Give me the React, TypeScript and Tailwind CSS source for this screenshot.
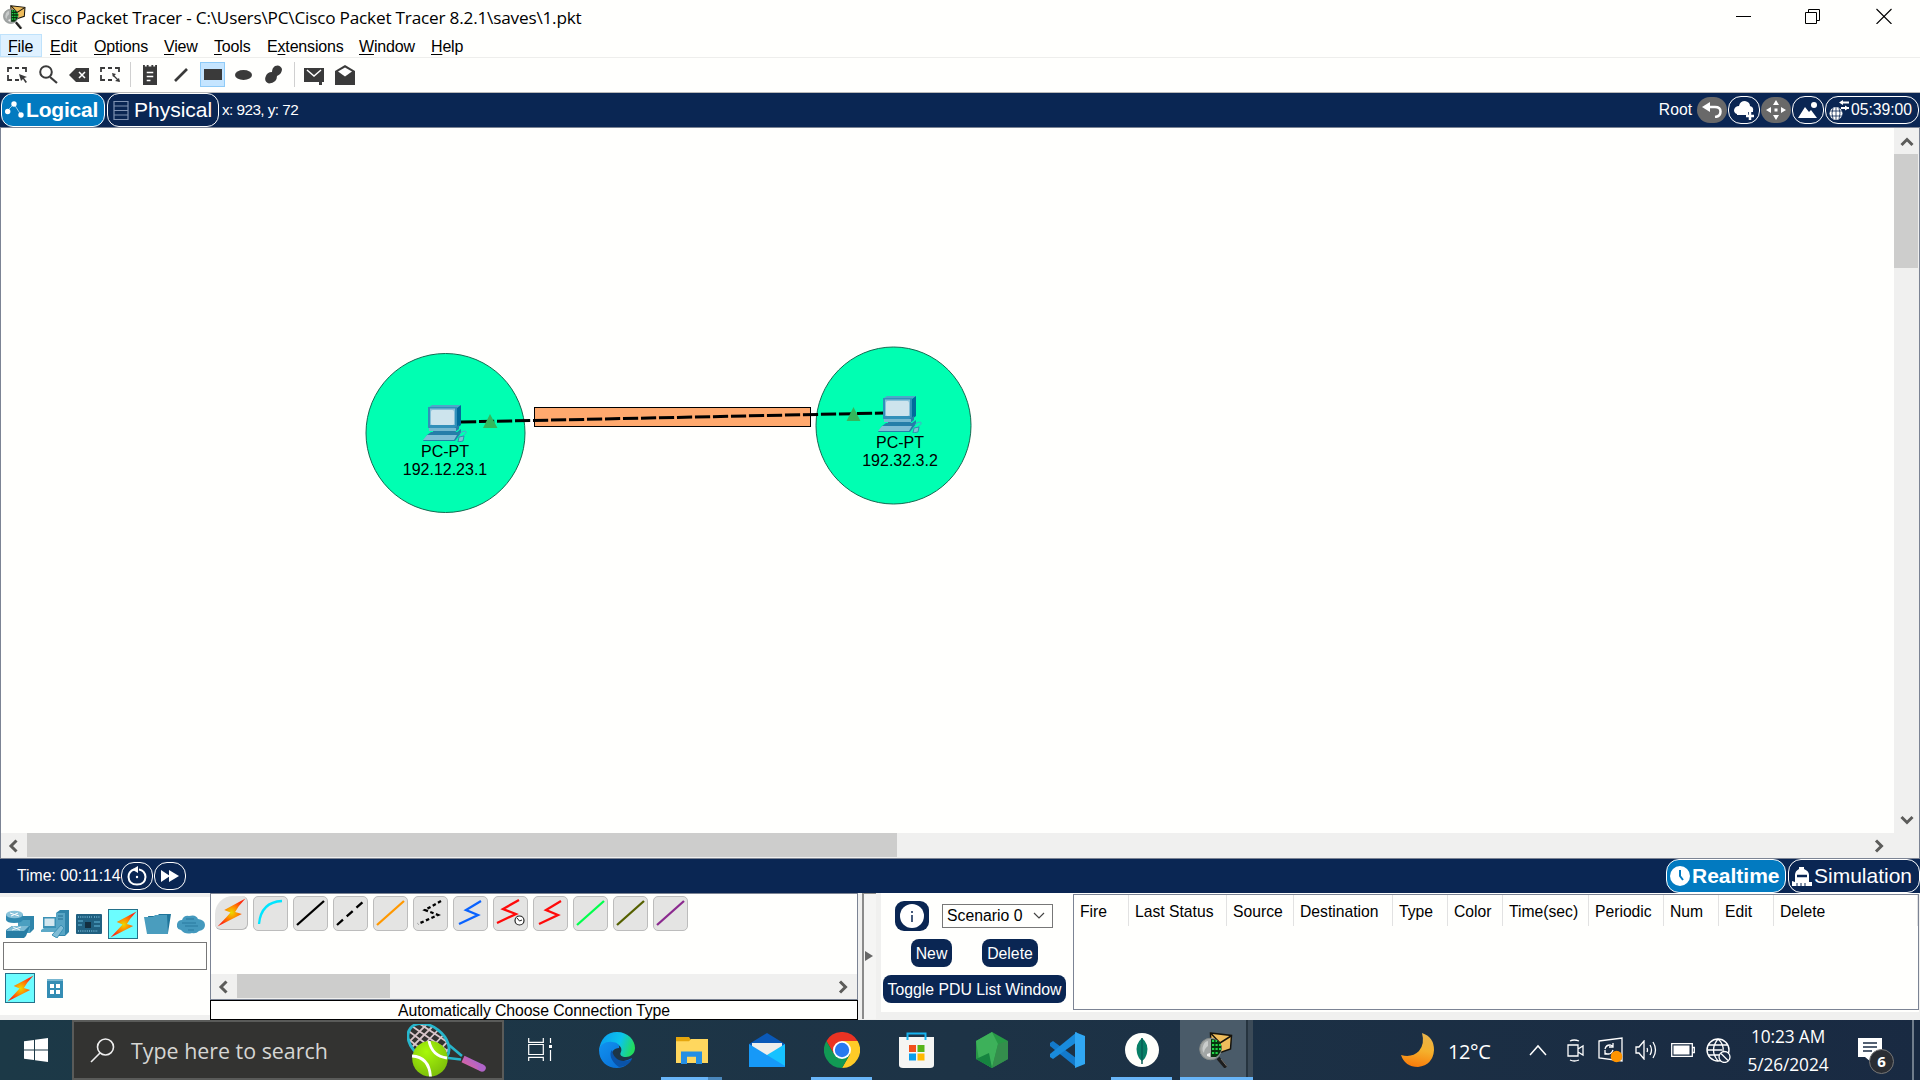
import React from "react";

type P = { className?: string; children?: React.ReactNode; box: string };

function Svg({ className = "", box, children }: P) {
  return (
    <svg viewBox={box} preserveAspectRatio="none" className={`block shrink-0 ${className}`} fill="none">
      {children}
    </svg>
  );
}

function TracerIcon({ className }: { className: string }) {
  return (
    <Svg box="0 0 34 36" className={className}>
      <path d="M19 26L27 35.500" stroke="#1d1d1d" strokeWidth="3.500" />
      <path d="M22 27L28 34.500" stroke="#77736e" strokeWidth="1" />
      <path d="M11.500 1L32.500 3.500L31.500 17L20 21L12 15Z" fill="#efbd5c" stroke="#16130c" strokeWidth="1.500" />
      <path d="M12 1.500L21 11L32 4" stroke="#16130c" strokeWidth="1.500" />
      <circle cx="11.500" cy="17" r="10.800" fill="#a2a6a5" stroke="#858a88" strokeWidth="1" />
      <path d="M12 7Q21 7 22.500 14Q23 21 17 25H12Z" fill="#06340d" />
      <path d="M13 9H18M13 13H22M13 17H22M13 21H20" stroke="#20d647" strokeWidth="2" strokeDasharray="2.200 1.300" />
      <path d="M3.500 16Q5 9 9 9V14Q5 17 5 21Q3 19 3.500 16Z" fill="#c9cccb" />
      <path d="M8 22L11 21V25L8 24Z" fill="#eee" />
    </Svg>
  );
}

function Bolt({ className }: { className: string }) {
  return (
    <Svg box="0 0 28 28" className={className}>
      <defs>
        <radialGradient id="boltFill">
          <stop offset="0" stopColor="#e9dc00" />
          <stop offset=".45" stopColor="#ff8a00" />
          <stop offset="1" stopColor="#ff2a10" />
        </radialGradient>
      </defs>
      <path d="M27.500 0.500L7 11.500L13 14L9 18.500L0.500 27.500L24 15.500L17.500 13.500L21 8Z" fill="url(#boltFill)" />
    </Svg>
  );
}

function Chevron({ dir }: { dir: "up" | "down" | "left" | "right" }) {
  const d = {
    up: "M1.500 9L7 3.500L12.500 9",
    down: "M1.500 4L7 9.500L12.500 4",
    left: "M9.500 1.500L4 7L9.500 12.500",
    right: "M4 1.500L9.500 7L4 12.500",
  }[dir];
  return (
    <Svg box="0 0 14 14" className="h-[14px] w-[14px]">
      <path d={d} stroke="#5c5c5a" strokeWidth="3" />
    </Svg>
  );
}

function TitleBar() {
  return (
    <header className="flex h-[34px] shrink-0 items-start">
      <TracerIcon className="ml-[3px] mt-[5px] h-[24px] w-[23px]" />
      <h1 className="ml-[5px] mt-[5px] w-[600px] whitespace-nowrap font-['Open_Sans',sans-serif] text-[17.2px] leading-[25px] tracking-[-0.2px] text-black">
        Cisco Packet Tracer - C:\Users\PC\Cisco Packet Tracer 8.2.1\saves\1.pkt
      </h1>
      <div className="ml-auto mt-[8px] flex pr-[28px]">
        <Svg box="0 0 16 16" className="mr-[53px] h-4 w-4">
          <path d="M0 8.500H15" stroke="#000" />
        </Svg>
        <Svg box="0 0 16 16" className="mr-[55px] h-4 w-4">
          <path d="M0.500 4.500H11.500V15.500H0.500ZM3.500 4V1.500H14.500V12.500H12" stroke="#000" />
        </Svg>
        <Svg box="0 0 16 16" className="h-4 w-4">
          <path d="M0.500 1L15.500 16M15.500 1L0.500 16" stroke="#000" strokeWidth="1.100" />
        </Svg>
      </div>
    </header>
  );
}

const menu: [string, string, string, string][] = [
  ["", "F", "ile", "w-[42px] bg-[#dff1ff] border border-[#bfe2fb] pl-[7px] leading-[24px]"],
  ["", "E", "dit", "w-[44px] pl-[8px] leading-[26px]"],
  ["", "O", "ptions", "w-[70px] pl-[8px] leading-[26px]"],
  ["", "V", "iew", "w-[50px] pl-[8px] leading-[26px]"],
  ["", "T", "ools", "w-[53px] pl-[8px] leading-[26px]"],
  ["E", "x", "tensions", "w-[92px] pl-[8px] leading-[26px]"],
  ["", "W", "indow", "w-[72px] pl-[8px] leading-[26px]"],
  ["", "H", "elp", "w-[60px] pl-[8px] leading-[26px]"],
];

function MenuBar() {
  return (
    <nav className="flex h-[24px] shrink-0 items-start border-b border-[#eeeeec] text-[16px] tracking-[-0.17px] text-black">
      {menu.map(([a, u, b, cls]) => (
        <div key={u + b} className={`box-border h-[23px] whitespace-nowrap ${cls}`}>
          {a}
          <span className="underline decoration-1 underline-offset-[2px]">{u}</span>
          {b}
        </div>
      ))}
    </nav>
  );
}

function ToolBar() {
  return (
    <div className="flex h-[35px] shrink-0 items-center border-b border-[#b9b9b9] pb-[1px] text-[#3a3a3a]">
      <Svg box="0 0 21 16" className="ml-[7px] h-4 w-[21px]">
        <path d="M1 5V1H5M8 1H12M15 1H19V5M1 8V13H5M8 13H12" stroke="currentColor" strokeWidth="1.800" />
        <path d="M12 7L20 10L17 11L20 15L18.500 16L16 12L14 14Z" fill="currentColor" />
      </Svg>
      <Svg box="0 0 20 19" className="ml-[10px] h-[19px] w-5">
        <circle cx="8" cy="7" r="5.800" stroke="currentColor" strokeWidth="2" />
        <path d="M12 12L19 18" stroke="currentColor" strokeWidth="2.200" />
      </Svg>
      <Svg box="0 0 20 14" className="ml-[11px] h-[14px] w-5">
        <path d="M0 7L7 0H20V14H7Z" fill="currentColor" />
        <path d="M10 4L16 10M16 4L10 10" stroke="#fff" strokeWidth="1.500" />
      </Svg>
      <Svg box="0 0 21 16" className="ml-[11px] h-4 w-[21px]">
        <path d="M1 5V1H5M8 1H12M15 1H19V5M1 8V13H5M8 13H12" stroke="currentColor" strokeWidth="1.800" />
        <path d="M12 6L16 7L13 10ZM20 15L15 14L19 11Z" fill="currentColor" />
        <path d="M13 8L19 14" stroke="currentColor" strokeWidth="1.300" />
      </Svg>
      <div className="ml-[9px] h-[25px] w-px bg-[#d0d0d0]" />
      <Svg box="0 0 15 20" className="ml-[12px] h-5 w-[14px]">
        <path d="M0 0H2V1.500H4V0H6V1.500H9V0H11V1.500H13V0H15V20H0Z" fill="currentColor" />
        <path d="M4 7.500H11M4 11.500H11M4 15.500H8" stroke="#fff" strokeWidth="1.500" />
      </Svg>
      <Svg box="0 0 14 14" className="ml-[17px] h-[14px] w-[14px]">
        <path d="M1 13L13 1" stroke="currentColor" strokeWidth="2.600" />
      </Svg>
      <div className="ml-[12px] flex h-[25px] w-[25px] items-center justify-center border border-[#8fcbf8] bg-[#c5e5ff]">
        <div className="h-[11px] w-[18px] bg-[#3a3a3a]" />
      </div>
      <div className="ml-[10px] h-[10px] w-[17px] rounded-[50%] bg-[#3a3a3a]" />
      <Svg box="0 0 17 19" className="ml-[13px] h-[19px] w-[17px]">
        <path d="M10 1Q15-1 17 4Q17 9 12 11Q12 18 4 18.500Q-1 17 0.500 12Q2 7 7 7Q7 3 10 1Z" fill="currentColor" />
      </Svg>
      <div className="ml-[12px] h-[25px] w-px bg-[#d0d0d0]" />
      <Svg box="0 0 20 18" className="ml-[9px] mt-[2px] h-[18px] w-5">
        <path d="M0 1H20V15H18V18H15V15H0Z" fill="currentColor" />
        <path d="M3 3L10 9L17 3" stroke="#fff" strokeWidth="1.500" />
      </Svg>
      <Svg box="0 0 20 20" className="ml-[11px] h-5 w-5">
        <path d="M0 6L10 0L20 6V20H0Z" fill="currentColor" />
        <path d="M3 6.500L10 2.500L17 6.500L10 11.500Z" fill="#fff" />
      </Svg>
    </div>
  );
}

const pill = "flex h-[28px] w-[32px] items-center justify-center rounded-[13px] border border-white";
const greyPill = "flex h-[26px] w-[30px] items-center justify-center rounded-[13px] bg-[#696969]";

function ViewBar() {
  return (
    <div className="flex h-[34px] shrink-0 items-center bg-[#0a2653] text-[16px] text-white">
      <button className="ml-px flex h-[34px] w-[104px] items-center rounded-[12px] border border-white bg-[#027ac0] pl-[3px] text-[21px] font-bold tracking-[-0.2px]">
        <Svg box="0 0 20 18" className="h-[18px] w-5">
          <path d="M2 10L9 3L16 14" stroke="#9bcce8" />
          <circle cx="9" cy="3" r="2.700" fill="#fff" />
          <circle cx="2.700" cy="10.500" r="2.700" fill="#fff" />
          <circle cx="16" cy="14" r="2.700" fill="#fff" />
        </Svg>
        <span className="ml-[1px]">Logical</span>
      </button>
      <button className="ml-[2px] flex h-[34px] w-[112px] items-center rounded-[12px] border border-white pl-[5px] text-[21px]">
        <Svg box="0 0 16 19" className="h-[19px] w-4">
          <path d="M1 0.500H15V18.500H1ZM1 5H15M1 9.500H15M1 14H15" stroke="#7f92b2" strokeWidth="1.200" />
        </Svg>
        <span className="ml-[5px]">Physical</span>
      </button>
      <span className="ml-[3px] text-[15.300px] tracking-[-0.55px]">x: 923, y: 72</span>
      <div className="ml-auto flex items-center gap-px pr-px">
        <span className="mr-[4px] text-[15.700px]">Root</span>
        <div className={greyPill}>
          <Svg box="0 0 20 16" className="h-4 w-5">
            <path d="M0 5L8 0V10Z" fill="#fff" />
            <path d="M6 5H13Q18.500 5 18.500 9.500Q18.500 14.500 13 15" stroke="#fff" strokeWidth="2.500" />
          </Svg>
        </div>
        <div className={pill}>
          <Svg box="0 0 20 19" className="h-[19px] w-5">
            <path d="M3 13Q0 12 0 9Q1 5 5 5Q6 0 11 0Q16 1 16 5Q20 6 19 10V11H14V14H3Z" fill="#fff" />
            <path d="M16 11V19M12 15H20" stroke="#fff" strokeWidth="2.500" />
          </Svg>
        </div>
        <div className={greyPill}>
          <Svg box="0 0 20 20" className="h-5 w-5">
            <path d="M10 0L13 5H7ZM10 20L7 15H13ZM0 10L5 7V13ZM20 10L15 13V7ZM8.500 8.500H11.500V11.500H8.500Z" fill="#fff" />
          </Svg>
        </div>
        <div className={pill}>
          <Svg box="0 0 20 16" className="h-4 w-5">
            <path d="M0 16L7 5L11 10L13 8L19 16Z" fill="#fff" />
            <circle cx="16" cy="3" r="3" fill="#fff" />
          </Svg>
        </div>
        <div className="flex h-[28px] w-[94px] items-center rounded-[13px] border border-white pl-[3px]">
          <Svg box="0 0 20 20" className="h-5 w-5">
            <circle cx="7" cy="13.500" r="6.500" fill="#fff" />
            <path d="M1 11H13M1 16H13M7 7V20M4 8Q2 13 4 19M10 8Q12 13 10 19" stroke="#0a2653" strokeWidth=".8" />
            <path d="M12 2.500H20M12 8H20" stroke="#fff" strokeWidth="2" />
            <path d="M10 2.500L14 0V5ZM20 8L16 5.500V10.500Z" fill="#fff" />
          </Svg>
          <span className="ml-[2px] text-[15.700px]">05:39:00</span>
        </div>
      </div>
    </div>
  );
}

function PC() {
  return (
    <Svg box="0 0 44 37" className="mb-px h-[37px] w-[44px]">
      <path d="M6 2L9 0H38L34 3Z" fill="#4fa6c9" />
      <path d="M34 3L38 0V20L34 23Z" fill="#006a9b" />
      <path d="M5 2H34V23H5Z" fill="#3190ba" />
      <path d="M7 3.500H32V20H7Z" fill="#86c0d9" />
      <rect x="8" y="5" width="23" height="15" rx="1.500" fill="#cde4ed" />
      <path d="M10 23H31L36 20V24L31 28H10Z" fill="#257ea9" />
      <path d="M6 23H33V26H6Z" fill="#76b6d1" />
      <path d="M4 30L8 27H34L38 24V28L32 36H0Z" fill="#257ea9" />
      <path d="M4 30H34L31 35H0Z" fill="#80bdd6" />
      <path d="M37 29Q38 26 42 26Q45 27 41 30L40 32" stroke="#4fa6c9" />
      <path d="M36 32L41 31L40 36L35 37Z" fill="#80bdd6" stroke="#257ea9" strokeWidth=".8" />
    </Svg>
  );
}

function Workspace() {
  return (
    <main className="grid h-[732px] shrink-0 grid-cols-[1893px_25px] grid-rows-[705px_25px] border border-[#7c8494]">
      <section className="relative overflow-hidden bg-[#fffffd] text-[16px] leading-[18px] text-black">
        <Svg box="1 128 1893 705" className="absolute inset-0 h-[705px] w-[1893px]">
          <circle cx="445.500" cy="433" r="79.500" fill="#00ffb2" stroke="#146b51" strokeWidth="1" />
          <ellipse cx="893.500" cy="425.500" rx="77.500" ry="78.500" fill="#00ffb2" stroke="#146b51" strokeWidth="1" />
          <rect x="534.500" y="407.500" width="276" height="19" fill="#ffa96e" stroke="#000" />
          <path d="M461 422L884 413" stroke="#000" strokeWidth="3" strokeDasharray="15.200 2.800" />
          <path d="M490 414L497.500 428H483ZM853.500 407L860.500 421H846.500Z" fill="#34b75c" />
        </Svg>
        <figure className="absolute left-[394px] top-[277px] flex w-[100px] flex-col items-center">
          <PC />
          <figcaption className="text-center">PC-PT<br />192.12.23.1</figcaption>
        </figure>
        <figure className="absolute left-[849px] top-[268px] flex w-[100px] flex-col items-center">
          <PC />
          <figcaption className="text-center">PC-PT<br />192.32.3.2</figcaption>
        </figure>
      </section>
      <div className="flex flex-col items-center bg-[#f0f0ef] pb-[6px]">
        <div className="flex h-[26px] items-center pt-[3px]"><Chevron dir="up" /></div>
        <div className="h-[114px] w-[24px] self-start bg-[#cdcdcc]" />
        <div className="mt-auto"><Chevron dir="down" /></div>
      </div>
      <div className="flex items-center bg-[#f0f0ef]">
        <div className="flex w-[26px] justify-center"><Chevron dir="left" /></div>
        <div className="h-[24px] w-[870px] self-start bg-[#cdcdcc]" />
        <div className="ml-auto pr-[8px]"><Chevron dir="right" /></div>
      </div>
      <div className="bg-[#f0f0ef]" />
    </main>
  );
}

function TimeBar() {
  return (
    <div className="flex h-[34px] shrink-0 items-center bg-[#0a2653] text-[16px] text-white">
      <span className="ml-[17px] w-[104px] whitespace-nowrap text-[15.800px]">Time: 00:11:14</span>
      <div className={pill}>
        <Svg box="0 0 20 20" className="h-5 w-5">
          <path d="M7 3.500Q1.500 5.500 1.500 11Q2 18.500 10 18.500Q18 18.500 18.500 11Q18 4.500 12 3.500" stroke="#fff" strokeWidth="2" />
          <path d="M5 3.500L11 0V7Z" fill="#fff" />
          <circle cx="10" cy="11" r="1.200" fill="#fff" />
        </Svg>
      </div>
      <div className={`ml-px ${pill}`}>
        <Svg box="0 0 18 12" className="h-3 w-[18px]">
          <path d="M0 0L9 6L0 12ZM8 0L18 6L8 12Z" fill="#fff" />
        </Svg>
      </div>
      <button className="ml-auto flex h-[34px] w-[120px] items-center rounded-[13px] border border-white bg-[#027ac0] pl-[3px] text-[21px] font-bold">
        <Svg box="0 0 20 20" className="h-5 w-5">
          <circle cx="10" cy="10" r="10" fill="#fff" />
          <path d="M10 4V10L13 14" stroke="#027ac0" strokeWidth="2" />
        </Svg>
        <span className="ml-[2px]">Realtime</span>
      </button>
      <button className="ml-[2px] flex h-[34px] w-[132px] items-center rounded-[13px] border border-white pl-[3px] text-[21px]">
        <Svg box="0 0 20 19" className="h-[19px] w-5">
          <path d="M3 15V8Q3 4 7 2V0H12V2Q17 4 17 8V15H20V19H0V14Z" fill="#fff" />
          <path d="M5 9H15" stroke="#0a2653" strokeWidth="2.500" />
          <path d="M5 16V19M9 16V19M13 16V19" stroke="#0a2653" />
        </Svg>
        <span className="ml-[2px]">Simulation</span>
      </button>
    </div>
  );
}

function DevicePanel() {
  return (
    <aside className="flex h-[127px] w-[210px] shrink-0 flex-col border-y-[5px] border-t-[4px] border-[#f0f0ef] bg-[#fffffd]">
      <div className="mt-[12px] flex h-[30px] items-center">
        <Svg box="0 0 28 28" className="ml-[6px] h-7 w-7">
          <path d="M12 10L17 6H28V19L24 23H12Z" fill="#2f85aa" />
          <path d="M12 10H24V23H12Z" fill="#4b9fc0" />
          <path d="M0 4V10Q1 13 8 13Q17 13 17 9V4Z" fill="#3089b0" />
          <ellipse cx="8.500" cy="4.500" rx="8.500" ry="3.800" fill="#8ac3da" />
          <path d="M4 3L13 6M12 3L5 6" stroke="#fff" />
          <path d="M0 20L6 16H24L20 26L18 28H0Z" fill="#277da4" />
          <path d="M0 21L6 16H23L18 21Z" fill="#7dbbd4" />
          <path d="M6 20L15 17M7 17L14 20" stroke="#fff" strokeWidth=".8" />
        </Svg>
        <Svg box="0 0 28 28" className="ml-[7px] h-7 w-7">
          <path d="M15 3L19 0H28V22L24 26H15Z" fill="#2f85aa" />
          <path d="M15 3H24V25H15Z" fill="#57a5c5" />
          <path d="M17 6H22M17 9H22" stroke="#246f91" />
          <rect x="2" y="7" width="13" height="11" fill="#3b91b5" />
          <rect x="3.500" y="8.500" width="10" height="7.500" fill="#d3e7ef" />
          <path d="M0 20L3 18H17L14 22H0Z" fill="#5ca9c7" />
          <path d="M11 25L20 15L23 18L16 28Z" fill="#7fbcd5" stroke="#3b91b5" />
        </Svg>
        <Svg box="0 0 26 20" className="ml-[7px] h-5 w-[26px]">
          <rect width="26" height="20" rx="1" fill="#206080" />
          <rect x="9" y="8" width="6" height="6" fill="#132f40" />
          <path d="M2 3H16M18 3H24M2 17H22" stroke="#6fb2cf" strokeWidth="1.500" strokeDasharray="1 1.200" />
          <path d="M2 7H7M2 11H6M18 8H24M18 12H24" stroke="#4e9cbd" strokeWidth="1.300" />
        </Svg>
        <div className="ml-[6px] flex h-[30px] w-[30px] items-center justify-center border border-[#24718a] bg-[#6cfdff]">
          <Bolt className="h-[27px] w-[27px]" />
        </div>
        <Svg box="0 0 27 20" className="ml-[6px] h-5 w-[27px]">
          <path d="M4 2H13L15 0H27L24 19H7Z" fill="#1f759a" />
          <path d="M0 3H9L11 1H23L24 20H3Z" fill="#4a9dbe" />
        </Svg>
        <Svg box="0 0 28 19" className="ml-[6px] h-[19px] w-7">
          <path d="M4 15Q-1 14 0 9Q1 5 5 5Q7 0 12 1Q19-1 21 4Q28 5 28 10Q28 15 22 16Q19 19 15 18Q8 20 4 15Z" fill="#4499bd" />
          <path d="M9 4H17M5 8H19M8 11H21M11 15H17" stroke="#297ba0" strokeWidth="1.200" />
        </Svg>
      </div>
      <input aria-label="Device search" className="ml-[3px] mt-[3px] block h-[28px] w-[204px] shrink-0 border border-[#777] bg-[#fffffd]" />
      <div className="mt-[3px] flex h-[30px] items-center pl-[5px]">
        <div className="flex h-[30px] w-[30px] items-center justify-center border border-[#24718a] bg-[#6cfdff]">
          <Bolt className="h-[27px] w-[27px]" />
        </div>
        <Svg box="0 0 16 19" className="ml-[12px] h-[19px] w-4">
          <path d="M0 0H16V19H0Z" fill="#348db4" />
          <path d="M0 0H16V2H0Z" fill="#77b6d0" />
          <path d="M3 5H7V9H3ZM9 5H13V9H9ZM3 11H7V15H3ZM9 11H13V15H9Z" fill="#fff" />
        </Svg>
      </div>
    </aside>
  );
}

const cables: { d: string; c: string; dash?: string }[] = [
  { d: "M6 28Q8 6 29 5", c: "#00e5ff" },
  { d: "M4 29L31 5", c: "#000" },
  { d: "M4 29L31 5", c: "#000", dash: "8 5" },
  { d: "M4 29L31 5", c: "#ff9800" },
  { d: "M28 5L12 14L25 19L5 28", c: "#000", dash: "3.5 2.5" },
  { d: "M28 5L13 14L25 19L6 28", c: "#0a63ff" },
  { d: "M26 4L10 13L23 18L4 27", c: "#ff0a0a" },
  { d: "M28 5L13 14L25 19L6 28", c: "#ff0a0a" },
  { d: "M4 29L31 5", c: "#00ff4c" },
  { d: "M4 29L31 5", c: "#556000" },
  { d: "M4 29L31 5", c: "#8b2a8f" },
];

function CablePanel() {
  return (
    <section className="flex h-[127px] w-[648px] shrink-0 flex-col">
      <div className="flex h-[107px] flex-col border border-[#7c8494] bg-[#fffffd]">
        <div className="ml-[4px] mt-[2px] flex h-[35px]">
          <div className="mr-[5px] flex h-[34px] w-[33px] items-center justify-center rounded-[6px] rounded-tl-[18px] border-b border-r border-[#b8b8b8] bg-[#e4e4e3]">
            <Bolt className="h-[29px] w-[29px]" />
          </div>
          <div className="flex gap-[5px]">
            {cables.map((k, i) => (
              <div key={i} className="h-[35px] w-[35px] rounded-[5px] border border-[#bcbcbc] bg-[#e4e4e3]">
                <Svg box="1 1 33 33" className="h-[33px] w-[33px]">
                  <path d={k.d} stroke={k.c} strokeWidth="2.300" strokeDasharray={k.dash} />
                  {i === 6 && (
                    <>
                      <circle cx="26.500" cy="24.500" r="4.500" fill="#fff" stroke="#222" strokeWidth="1.200" />
                      <path d="M24 22L26.500 25L29 24" stroke="#222" />
                    </>
                  )}
                </Svg>
              </div>
            ))}
          </div>
        </div>
        <div className="mt-auto flex h-[25px] items-center bg-[#f0f0ef]">
          <div className="flex w-[26px] justify-center"><Chevron dir="left" /></div>
          <div className="h-[24px] w-[153px] self-start bg-[#cdcdcc]" />
          <div className="ml-auto pr-[7px]"><Chevron dir="right" /></div>
        </div>
      </div>
      <div className="h-[20px] border border-black bg-[#fffffd] text-center text-[15.800px] leading-[19px] tracking-[-0.1px] text-black">
        Automatically Choose Connection Type
      </div>
    </section>
  );
}

const navy = "flex h-[28px] items-center justify-center rounded-[8px] bg-[#0a2653] pt-px text-[15.800px] text-white whitespace-nowrap";

function ScenarioPanel() {
  return (
    <section className="flex h-[119px] w-[191px] shrink-0 flex-col bg-[#fffffd] text-black">
      <div className="mt-[8px] flex h-[30px] items-center pl-[14px]">
        <div className="flex h-[30px] w-[34px] items-center justify-center rounded-[9px] bg-[#0a2653]">
          <Svg box="0 0 24 24" className="h-6 w-6">
            <circle cx="12" cy="12" r="12" fill="#fff" />
            <path d="M12 7V9M12 11V18" stroke="#0a2653" strokeWidth="1.500" />
          </Svg>
        </div>
        <div className="ml-[13px] flex h-[24px] w-[111px] items-center border border-[#777] pl-[4px] text-[15.800px]">
          Scenario 0
          <Svg box="0 0 12 8" className="ml-auto mr-[7px] h-2 w-3">
            <path d="M1 1L6 6L11 1" stroke="#444" strokeWidth="1.200" />
          </Svg>
        </div>
      </div>
      <div className="mt-[8px] flex pl-[30px]">
        <button className={`w-[41px] ${navy}`}>New</button>
        <button className={`ml-[30px] w-[56px] ${navy}`}>Delete</button>
      </div>
      <button className={`ml-[2px] mt-[8px] w-[183px] ${navy}`}>Toggle PDU List Window</button>
    </section>
  );
}

const columns: [string, string][] = [
  ["Fire", "w-[55px]"],
  ["Last Status", "w-[98px]"],
  ["Source", "w-[67px]"],
  ["Destination", "w-[99px]"],
  ["Type", "w-[55px]"],
  ["Color", "w-[55px]"],
  ["Time(sec)", "w-[86px]"],
  ["Periodic", "w-[75px]"],
  ["Num", "w-[55px]"],
  ["Edit", "w-[55px]"],
  ["Delete", "w-[144px]"],
];

function BottomDock() {
  return (
    <div className="flex h-[127px] shrink-0 bg-[#f0f0ef]">
      <DevicePanel />
      <CablePanel />
      <div className="ml-[4px] flex h-[126px] w-[14px] shrink-0 items-center border-l-2 border-t border-[#8b8b8b] bg-[#f5f5f4] pb-[2px] pl-px">
        <Svg box="0 0 8 10" className="h-[10px] w-2">
          <path d="M0 0L8 5L0 10Z" fill="#666" />
        </Svg>
      </div>
      <div className="ml-[5px] flex h-[119px] shrink-0 bg-[#fffffd]">
        <ScenarioPanel />
        <div className="ml-[1px] mt-px h-[116px] w-[846px] border border-[#7c8494] text-[15.700px] text-black">
          <div className="flex h-[31px]">
            {columns.map(([label, w]) => (
              <div key={label} className={`box-border shrink-0 whitespace-nowrap border-r border-[#e2e2e2] pl-[6px] leading-[33px] ${w}`}>
                {label}
              </div>
            ))}
          </div>
        </div>
      </div>
    </div>
  );
}

function SearchBox() {
  return (
    <div className="ml-[24px] flex h-[60px] w-[432px] shrink-0 items-center border-2 border-[#5a5b59] bg-[#333331]">
      <Svg box="0 0 25 25" className="ml-[16px] h-[25px] w-[25px]">
        <circle cx="15.500" cy="9" r="8" stroke="#eee" strokeWidth="1.600" />
        <path d="M10 15L1 24" stroke="#eee" strokeWidth="1.600" />
      </Svg>
      <span className="ml-[16px] w-[260px] whitespace-nowrap pt-[3px] font-['Open_Sans',sans-serif] text-[21.400px] tracking-[0px] text-[#d6d6d4]">Type here to search</span>
      <Svg box="0 0 80 54" className="ml-[16px] mt-[2px] h-[54px] w-20">
        <defs>
          <linearGradient id="grip" x1="52" y1="40" x2="60" y2="30" gradientUnits="userSpaceOnUse">
            <stop stopColor="#e0649b" />
            <stop offset="1" stopColor="#b064c8" />
          </linearGradient>
          <radialGradient id="ball" cx=".4" cy=".3" r=".8">
            <stop stopColor="#a8f80a" />
            <stop offset="1" stopColor="#78b90a" />
          </radialGradient>
          <clipPath id="head">
            <ellipse cx="21.500" cy="18.500" rx="22" ry="15.500" transform="rotate(38 21.500 18.500)" />
          </clipPath>
        </defs>
        <path clipPath="url(#head)" d="M0 6L44 38M2 0L48 32M10 -2L48 23M0 14L36 42M-2 22L20 0M2 26L28 0M8 30L35 2M14 35L40 7M20 39L46 12M26 42L48 18" stroke="#d9c6ca" strokeWidth="1.800" />
        <ellipse cx="21.500" cy="18.500" rx="23" ry="15.800" transform="rotate(38 21.500 18.500)" stroke="#27b6cc" strokeWidth="2.800" />
        <path d="M42 21L55 32M54 35.500L37 33.500" stroke="#27b6cc" strokeWidth="2.600" />
        <path d="M56 35L76 44.500" stroke="url(#grip)" strokeWidth="7" />
        <path d="M74 43.500L75.500 44.200" stroke="#b064c8" strokeWidth="6.600" strokeLinecap="round" />
        <circle cx="23" cy="34.700" r="17.800" fill="url(#ball)" />
        <path d="M22 17Q25 32 40 34M5 32Q22 33 23.500 52.500" stroke="#fff" strokeWidth="2.800" />
      </Svg>
    </div>
  );
}

function AppSlot({ children, on }: { children: React.ReactNode; on?: boolean }) {
  return (
    <div className="flex h-[60px] w-[61px] shrink-0 flex-col items-center">
      <div className="flex h-[57px] w-full items-center justify-center pb-px pt-[4px]">{children}</div>
      <div className={`h-[3px] w-full ${on ? "bg-[#68b5f8]" : ""}`} />
    </div>
  );
}

function Taskbar() {
  return (
    <footer className="flex h-[60px] shrink-0 items-center bg-linear-to-r from-[#1c3947] via-[#1d3346] to-[#192a42] text-white">
      <Svg box="0 0 24 24" className="ml-[24px] h-6 w-6">
        <path d="M0 3.300L10 2V11.500H0ZM11 1.800L24 0V11.500H11ZM0 12.500H10V22L0 20.700ZM11 12.500H24V24L11 22.200Z" fill="#fff" />
      </Svg>
      <SearchBox />
      <Svg box="0 0 25 24" className="ml-[24px] h-6 w-[25px]">
        <path d="M.7 0V4.300H15.300V0M.7 6.500H15.300V16.500H.7ZM.7 23V19.300H15.300V23M22.500 0V5M22.500 12V23" stroke="#fff" strokeWidth="1.200" />
        <path d="M21 7H24V10H21Z" fill="#fff" />
      </Svg>
      <div className="ml-[33px] flex gap-[14px]">
        <AppSlot>
          <Svg box="0 0 36 36" className="h-9 w-9">
            <defs>
              <linearGradient id="edgeTop" x1="4" y1="6" x2="34" y2="16" gradientUnits="userSpaceOnUse">
                <stop stopColor="#0aa4f0" />
                <stop offset=".55" stopColor="#0cc4ec" />
                <stop offset="1" stopColor="#22dc5e" />
              </linearGradient>
              <linearGradient id="edgeLow" x1="2" y1="12" x2="20" y2="34" gradientUnits="userSpaceOnUse">
                <stop stopColor="#108fee" />
                <stop offset="1" stopColor="#0a72d8" />
              </linearGradient>
            </defs>
            <path d="M0 19C1 7 8 0 18 0C29 0 36 8 36 16C36 22 31 25 27 25C23 25 20 23 22 20C24 15 19 11 13 11C7 11 1 14 0 19Z" fill="url(#edgeTop)" />
            <path d="M0 18C1 12 8 9 13 10C18 10 21 13 20 16C15 16 12 20 13 24C15 31 24 31 33 26C30 32 25 36 18 36C8 36 0 29 0 18Z" fill="url(#edgeLow)" />
            <path d="M13 18C10 21 11 29 20 35C27 35 31 31 33 27C24 31 15 29 13 18Z" fill="#0a53a8" />
          </Svg>
        </AppSlot>
        <div className="flex h-[60px] w-[61px] flex-col items-center">
          <div className="flex h-[57px] items-center pt-[4px]">
            <Svg box="0 0 32 26" className="h-[27px] w-8">
              <path d="M0 0H13L15 3H30V24H0Z" fill="#e5a60d" />
              <path d="M0 4H13L15 2H32V25H0Z" fill="#ffd75e" />
              <path d="M5 26V14H26V26H20V19H11V26Z" fill="#258fe4" />
            </Svg>
          </div>
          <div className="flex h-[3px] w-full"><div className="w-[47px] bg-[#68b5f8]" /><div className="w-[14px] bg-[#4a87bc]" /></div>
        </div>
        <AppSlot>
          <Svg box="0 0 36 34" className="h-[34px] w-9">
            <path d="M0 11L18 0L36 11V34H0Z" fill="#0a59b8" />
            <path d="M3 10H33V22L18 24L3 16Z" fill="#eeeeec" />
            <path d="M36 11V34H0L18 22Z" fill="#16c2ff" />
            <path d="M0 11L36 33V34H0Z" fill="#1699f8" />
          </Svg>
        </AppSlot>
        <AppSlot on>
          <Svg box="0 0 36 36" className="h-9 w-9">
            <path d="M2.400 9A18 18 0 0 1 33.600 9H18L10.200 22.500Z" fill="#ea3323" />
            <path d="M33.600 9A18 18 0 0 1 18 36L25.800 22.500L18 9Z" fill="#ffcb27" />
            <path d="M2.400 9A18 18 0 0 0 18 36L25.800 22.500H10.200Z" fill="#119954" />
            <circle cx="18" cy="18" r="9" fill="#fff" />
            <circle cx="18" cy="18" r="7.200" fill="#287aef" />
          </Svg>
        </AppSlot>
        <AppSlot>
          <Svg box="0 0 35 36" className="h-9 w-[35px]">
            <path d="M8.500 9V1.500H26.500V9" stroke="#16b3ef" strokeWidth="2" />
            <path d="M0 5H35V33Q35 36 31 36H4Q0 36 0 33Z" fill="#f5f5f3" />
            <path d="M8.500 5V8M26.500 5V8" stroke="#16b3ef" strokeWidth="2" />
            <path d="M10 13H17V20H10Z" fill="#f2501c" />
            <path d="M18.500 13H25.500V20H18.500Z" fill="#58b51a" />
            <path d="M10 21.500H17V28.500H10Z" fill="#0a9dea" />
            <path d="M18.500 21.500H25.500V28.500H18.500Z" fill="#ffb900" />
          </Svg>
        </AppSlot>
        <AppSlot>
          <Svg box="0 0 32 36" className="h-9 w-8">
            <path d="M16 0L32 9V27L16 36L0 27V9Z" fill="#279946" />
            <path d="M16 0L0 9L3 28L16 36L22 12Z" fill="#3db15a" />
            <path d="M22 12L32 9V27L16 36Z" fill="#348e4c" />
            <path d="M0 27L13 21L16 36Z" fill="#168440" />
          </Svg>
        </AppSlot>
        <AppSlot>
          <Svg box="0 0 36 36" className="h-9 w-9">
            <path d="M1 11L4 9L27 26V35L1 14Z" fill="#137acb" />
            <path d="M1 25L4 27L28 10V0L1 22Z" fill="#198bdc" />
            <path d="M26 0L36 4V32L26 36Z" fill="#30a7f4" />
          </Svg>
        </AppSlot>
        <AppSlot on>
          <Svg box="0 0 34 34" className="h-[34px] w-[34px]">
            <circle cx="17" cy="17" r="17" fill="#fffffb" />
            <path d="M17 5Q10 11 12 20Q13 25 17 28Q21 25 22 20Q24 11 17 5Z" fill="#087f65" />
            <path d="M17 5V31" stroke="#075e56" strokeWidth="1.500" />
          </Svg>
        </AppSlot>
      </div>
      <div className="ml-[8px] flex h-[60px] w-[73px] shrink-0 flex-col bg-[#4a5b69]">
        <div className="flex h-[57px]">
          <div className="flex w-[66px] items-center justify-center pl-[5px] pt-[3px]"><TracerIcon className="h-9 w-[34px]" /></div>
          <div className="w-[2px] bg-[#26343f]" />
          <div className="w-[5px] bg-[#3b4a57]" />
        </div>
        <div className="h-[3px] bg-[#68b5f8]" />
      </div>
      <div className="ml-auto flex h-[60px] items-center font-['Open_Sans',sans-serif]">
        <Svg box="0 0 33 34" className="h-[34px] w-[33px]">
          <defs>
            <linearGradient id="moon" x1="20" y1="0" x2="14" y2="34" gradientUnits="userSpaceOnUse">
              <stop stopColor="#e9b44c" />
              <stop offset=".5" stopColor="#f5b02c" />
              <stop offset="1" stopColor="#f97b0a" />
            </linearGradient>
          </defs>
          <path d="M21 0Q33 4 33 17Q32 32 17 34Q4 34 0 22Q11 25 18 18Q24 11 21 0Z" fill="url(#moon)" />
        </Svg>
        <span className="ml-[14px] w-[81px] pt-[4px] text-[20px] tracking-[-0.4px]">12°C</span>
        <Svg box="0 0 18 12" className="h-3 w-[18px]">
          <path d="M1 11L9 2L17 11" stroke="#fff" strokeWidth="1.500" />
        </Svg>
        <Svg box="0 0 17 23" className="ml-[20px] h-[23px] w-[17px]">
          <path d="M1 6H11V17H1ZM11 10L16 7V16L11 13M3 2Q7 0 12 2M3 21Q7 23 12 21" stroke="#fff" strokeWidth="1.300" />
        </Svg>
        <Svg box="0 0 25 26" className="ml-[14px] h-[26px] w-[25px]">
          <path d="M1 4L24 1V24L1 21Z" stroke="#fff" strokeWidth="1.300" />
          <path d="M7 12Q8 8 12 8L15 9M15 6V10H11M7 13V17H11M7 16Q13 19 15 13" stroke="#fff" strokeWidth="1.300" />
          <circle cx="18.500" cy="19.500" r="5.800" fill="#ff9400" />
        </Svg>
        <Svg box="0 0 23 20" className="ml-[12px] h-5 w-[23px]">
          <path d="M1 7H4L9 1V19L4 13H1Z" stroke="#fff" strokeWidth="1.300" />
          <path d="M12 8Q13 10 12 12M15 5Q18 10 15 15M18 2Q23 10 18 18" stroke="#fff" strokeWidth="1.300" />
        </Svg>
        <Svg box="0 0 24 14" className="ml-[13px] h-[14px] w-6">
          <path d="M.7 .7H21.300V13.300H.7ZM21 4.500H23.300V9.500H21" stroke="#fff" strokeWidth="1.300" />
          <path d="M2.500 2.500H18.500V11.500H2.500Z" fill="#fff" />
        </Svg>
        <Svg box="0 0 25 25" className="ml-[11px] h-[25px] w-[25px]">
          <circle cx="12" cy="12" r="11" stroke="#fff" strokeWidth="1.400" />
          <path d="M1 12H16M2 7H22M2 17H13M12 1Q3 12 12 23M12 1Q18 6 17 13" stroke="#fff" strokeWidth="1.300" />
          <circle cx="18.500" cy="19" r="5.500" fill="#1b2c44" stroke="#fff" strokeWidth="1.300" />
          <path d="M15 15.500L22 22.500" stroke="#fff" strokeWidth="1.300" />
        </Svg>
        <div className="ml-[15px] w-[84px] whitespace-nowrap pt-[1px] text-center text-[17.300px] leading-[28px] tracking-[-0.1px]">
          10:23 AM<br />5/26/2024
        </div>
        <div className="relative ml-[28px] h-[44px] w-[36px] pt-[10px]">
          <Svg box="0 0 24 24" className="h-6 w-6">
            <path d="M0 0H24V19H13V24L7 19H0Z" fill="#fff" />
            <path d="M5 5H19M5 9H19M5 13H14" stroke="#1b2c44" strokeWidth="1.300" />
          </Svg>
          <div className="absolute left-[11px] top-[21px] flex h-[25px] w-[25px] items-center justify-center rounded-full border border-[#777] bg-[#2a2d33] text-[15px] font-bold">6</div>
        </div>
        <div className="ml-[18px] mr-[6px] h-[60px] w-[2px] bg-[#707d8c]" />
      </div>
    </footer>
  );
}

export default function App() {
  return (
    <div className="flex h-[1080px] w-[1920px] flex-col overflow-hidden bg-[#fffffd] font-['Liberation_Sans',Arial,sans-serif]">
      <TitleBar />
      <MenuBar />
      <ToolBar />
      <ViewBar />
      <Workspace />
      <TimeBar />
      <BottomDock />
      <Taskbar />
    </div>
  );
}
